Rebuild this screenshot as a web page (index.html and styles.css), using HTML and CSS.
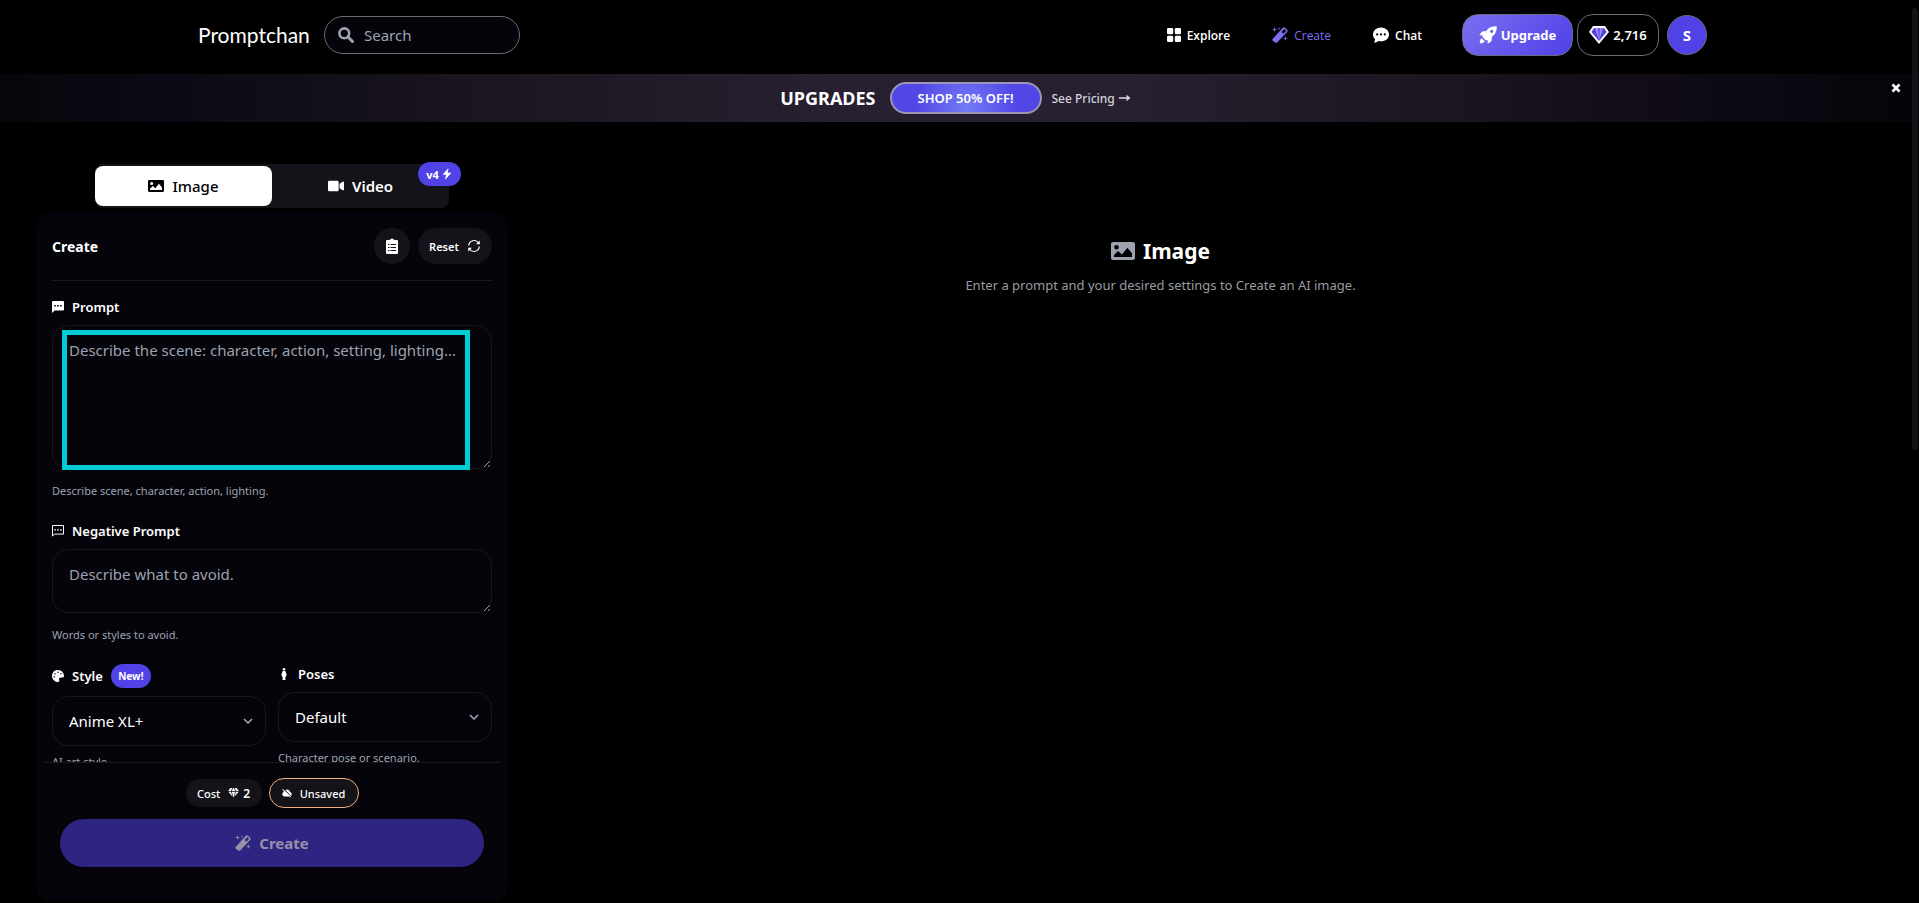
FILE: index.html
```html
<!DOCTYPE html>
<html lang="en">
<head>
<meta charset="utf-8">
<meta name="viewport" content="width=device-width, initial-scale=1">
<title>Promptchan - Create</title>
<link rel="stylesheet" href="styles.css">
</head>
<body>
<svg class="sprite" aria-hidden="true">
  <symbol id="i-search" viewBox="0 0 16 16"><circle cx="6.3" cy="6.3" r="4.9" fill="none" stroke="currentColor" stroke-width="2.6"/><path d="M10.2 10.2l4.2 4.2" stroke="currentColor" stroke-width="3" stroke-linecap="round"/></symbol>
  <symbol id="i-grid" viewBox="0 0 14 14"><rect width="6.2" height="6.2" rx="1.2"/><rect x="7.8" width="6.2" height="6.2" rx="1.2"/><rect y="7.8" width="6.2" height="6.2" rx="1.2"/><rect x="7.8" y="7.8" width="6.2" height="6.2" rx="1.2"/></symbol>
  <symbol id="i-wand" viewBox="0 0 16 16"><path fill-rule="evenodd" d="M.6 12 10.800.7q.9-.9 2-.1l2.400 2.200q.9.9.1 2L5.200 15.400q-1 .9-2 0L.7 13.700q-.8-.8-.1-1.700zM9.600 5.100l1.800 1.700 2.300-2.500q.4-.5 0-1l-.7-.7q-.6-.5-1.100 0z"/><path d="M2.600.200l.6 1.800 1.800.6-1.800.6-.6 1.800-.6-1.800L.2 2.600 2 2zM7 .300l.4.900.9.4-.9.4L7 2.900 6.600 2l-.9-.4.9-.4zM13.400 9l.6 1.900 1.900.6-1.900.6-.6 1.900-.6-1.900-1.900-.6 1.900-.6z"/></symbol>
  <symbol id="i-chat" viewBox="0 0 16 16"><path fill-rule="evenodd" d="M8 .5c4.500 0 8 3 8 6.900s-3.500 6.900-8 6.900c-.9 0-1.700-.1-2.500-.3-1 .9-2.500 1.600-4.600 1.500.8-.9 1.200-2.100 1.200-3.200C.8 11 0 9.300 0 7.400 0 3.500 3.500.5 8 .5zM4.200 6.300a1.100 1.100 0 1 0 0 2.200 1.100 1.100 0 0 0 0-2.200zm3.800 0a1.100 1.100 0 1 0 0 2.200 1.100 1.100 0 0 0 0-2.200zm3.800 0a1.100 1.100 0 1 0 0 2.200 1.100 1.100 0 0 0 0-2.200z"/></symbol>
  <symbol id="i-rocket" viewBox="0 0 18 18"><path fill-rule="evenodd" d="M17.700.3C13 .1 9.600 1.400 7.300 5L3.600 5.400q-.6.1-1 .6L.3 9.300l3.600.1-.5 1.700 3.500 3.500 1.700-.5.1 3.600 3.300-2.300q.5-.4.600-1l.4-3.700c3.600-2.300 4.900-5.700 4.700-10.400zM12.700 3.700a1.600 1.600 0 1 1 0 3.200 1.600 1.600 0 0 1 0-3.200z"/><path d="M2.600 12.200c-1.300.7-1.700 2.200-1.900 5.100 2.900-.2 4.400-.6 5.100-1.900z"/></symbol>
  <symbol id="i-gem-color" viewBox="0 0 20 18"><path fill="#fff" d="M4 0h12l4 6-10 12L0 6z"/><path fill="#5140df" d="M5 2h10l2.600 4L10 15 2.400 6z"/><path fill="#9d8cf5" d="M6 2h8l-1 4-3 8-3-8z"/><path fill="#6c58ed" d="M9 2h2v4l-1 8-1-8z"/></symbol>
  <symbol id="i-close" viewBox="0 0 10 10"><path d="M1.500 1.500l7 7m0-7l-7 7" stroke="currentColor" stroke-width="2.600"/></symbol>
  <symbol id="i-arrow" viewBox="0 0 12 8"><path d="M0 4h10" stroke="currentColor" stroke-width="1.600"/><path d="M7.500.8 11.500 4 7.500 7.200z"/></symbol>
  <symbol id="i-image" viewBox="0 0 24 18"><path fill-rule="evenodd" d="M2 0h20q2 0 2 2v14q0 2-2 2H2q-2 0-2-2V2Q0 0 2 0zM5.500 3a2.300 2.300 0 1 0 0 4.600 2.300 2.300 0 0 0 0-4.600zM3 15h18v-3.800l-4.600-5.500L11 12.500 7 9l-4 4z"/></symbol>
  <symbol id="i-video" viewBox="0 64 576 384"><path d="M336.200 64H47.800C21.400 64 0 85.400 0 111.800v288.400C0 426.600 21.400 448 47.800 448h288.400c26.400 0 47.800-21.400 47.800-47.800V111.800c0-26.400-21.400-47.800-47.800-47.800zm189.400 37.700L416 177.300v157.400l109.600 75.500c21.200 14.600 50.400-.3 50.400-25.800V127.500c0-25.400-29.100-40.400-50.400-25.800z"/></symbol>
  <symbol id="i-bolt" viewBox="0 0 10 12"><path d="M6.500 0 .5 6.800h3.600L2.900 12 9.500 4.800H5.700z"/></symbol>
  <symbol id="i-clip" viewBox="0 0 12 16"><path fill-rule="evenodd" d="M1 2h2.500V1.500h1.200a1.400 1.400 0 0 1 2.600 0h1.200V2H11q1 0 1 1v12q0 1-1 1H1q-1 0-1-1V3q0-1 1-1zM2 6v1h1.500V6zm2.500 0v1H10V6zM2 9v1h1.500V9zm2.500 0v1H10V9zM2 12v1h1.500v-1zm2.500 0v1H10v-1z"/></symbol>
  <symbol id="i-reset" viewBox="0 0 14 14"><path d="M1.700 6.500A5.400 5.400 0 0 1 11.600 4M12.300 7.500A5.400 5.400 0 0 1 2.400 10" fill="none" stroke="currentColor" stroke-width="1.200"/><path d="M12.800 1.500v3.800H9zM1.200 12.500V8.700H5z"/></symbol>
  <symbol id="i-msg" viewBox="0 0 12 12"><path fill-rule="evenodd" d="M1 0h10q1 0 1 1v7.600q0 1-1 1H2.600L0 12V1q0-1 1-1zM2.300 4v1.400h1.600V4zm2.900 0v1.400h1.600V4zm2.900 0v1.400h1.600V4z"/></symbol>
  <symbol id="i-msg-line" viewBox="0 0 12 12"><path d="M.5.500h11v8.600H2.500L.5 11z" fill="none" stroke="currentColor"/><path d="M2.300 4.200h1.600v1.200H2.300zm2.900 0h1.600v1.200H5.200zm2.900 0h1.600v1.200H8.100z"/></symbol>
  <symbol id="i-palette" viewBox="0 0 512 512"><path d="M204.300 5C104.900 24.400 24.800 104.300 5.200 203.400c-37 187 131.700 326.400 258.800 306.700 41.200-6.400 61.400-54.600 42.500-91.700-23.100-45.400 9.900-98.400 60.900-98.400h79.700c35.800 0 64.800-29.600 64.900-65.300C511.500 97.100 368.100-26.900 204.300 5zM96 320c-17.700 0-32-14.300-32-32s14.300-32 32-32 32 14.300 32 32-14.300 32-32 32zm32-128c-17.700 0-32-14.300-32-32s14.300-32 32-32 32 14.300 32 32-14.300 32-32 32zm128-64c-17.700 0-32-14.300-32-32s14.300-32 32-32 32 14.300 32 32-14.300 32-32 32zm128 64c-17.700 0-32-14.300-32-32s14.300-32 32-32 32 14.300 32 32-14.300 32-32 32z"/></symbol>
  <symbol id="i-person" viewBox="0 0 12 12"><circle cx="6" cy="1.300" r="1.300"/><path d="M4.700 3h2.600l1.500 4-.8.500.3 1.300H7.400V12H4.600V8.800h-.9L4 7.500 3.200 7z"/></symbol>
  <symbol id="i-gem" viewBox="0 0 12 11"><path d="M2.600 0h2L3.300 3.200H.2zM5.400 0h1.200l1.200 3.200H4.200zM7.400 0h2l2.400 3.200H8.700zM.3 4h3l1.800 5.600zM4.200 4h3.600L6 10.600zM8.700 4h3L6.900 9.600z"/></symbol>
  <symbol id="i-cloud-off" viewBox="0 0 12 10"><path d="M2.600 2.600 9.300 9.200H3A2.800 2.800 0 0 1 1.700 4 3 3 0 0 1 2.600 2.600zM4 1.500a3.400 3.400 0 0 1 5.500 2.200 2.800 2.800 0 0 1 1.500 4.600zM.3.900l.8-.8 9.900 9.100-.8.800z"/></symbol>
</svg>

<header class="topbar">
  <div class="topbar-inner">
    <a class="logo" href="#">Promptchan</a>
    <label class="search">
      <svg class="icon icon-16"><use href="#i-search"/></svg>
      <input type="search" placeholder="Search" aria-label="Search">
    </label>
    <nav class="nav">
      <a href="#"><svg class="icon icon-14"><use href="#i-grid"/></svg>Explore</a>
      <a class="active" href="#"><svg class="icon icon-16"><use href="#i-wand"/></svg>Create</a>
      <a href="#"><svg class="icon icon-16"><use href="#i-chat"/></svg>Chat</a>
    </nav>
    <div class="account">
      <button class="upgrade" type="button"><svg class="icon icon-18"><use href="#i-rocket"/></svg>Upgrade</button>
      <button class="gems" type="button"><svg class="icon icon-20"><use href="#i-gem-color"/></svg>2,716</button>
      <button class="avatar" type="button">S</button>
    </div>
  </div>
</header>

<div class="banner">
  <strong>UPGRADES</strong>
  <button class="shop" type="button">SHOP 50% OFF!</button>
  <a href="#">See Pricing <svg class="icon icon-arrow"><use href="#i-arrow"/></svg></a>
  <button class="close" type="button" aria-label="Close"><svg class="icon icon-10"><use href="#i-close"/></svg></button>
</div>

<main class="workspace">
  <section class="sidebar">
    <div class="tabs">
      <button class="tab selected" type="button"><svg class="icon icon-tab"><use href="#i-image"/></svg>Image</button>
      <button class="tab" type="button"><svg class="icon icon-tab"><use href="#i-video"/></svg>Video</button>
      <span class="version">v4 <svg class="icon icon-12"><use href="#i-bolt"/></svg></span>
    </div>

    <form class="panel">
      <div class="panel-head">
        <h1>Create</h1>
        <button class="round" type="button" aria-label="Prompt list"><svg class="icon icon-16"><use href="#i-clip"/></svg></button>
        <button class="reset" type="button">Reset <svg class="icon icon-14"><use href="#i-reset"/></svg></button>
      </div>

      <div class="fields">
        <div class="field">
          <label for="prompt"><svg class="icon icon-12"><use href="#i-msg"/></svg>Prompt</label>
          <div class="prompt-wrap">
            <textarea id="prompt" class="tall" placeholder="Describe the scene: character, action, setting, lighting..."></textarea>
            <div class="highlight"></div>
          </div>
          <p>Describe scene, character, action, lighting.</p>
        </div>
        <div class="field">
          <label for="negative"><svg class="icon icon-12"><use href="#i-msg-line"/></svg>Negative Prompt</label>
          <textarea id="negative" class="short" placeholder="Describe what to avoid."></textarea>
          <p>Words or styles to avoid.</p>
        </div>
        <div class="pair">
          <div class="field">
            <label for="style"><svg class="icon icon-12"><use href="#i-palette"/></svg>Style <span class="new">New!</span></label>
            <select id="style"><option>Anime XL+</option></select>
            <p>AI art style.</p>
          </div>
          <div class="field">
            <label for="poses"><svg class="icon icon-12"><use href="#i-person"/></svg>Poses</label>
            <select id="poses"><option>Default</option></select>
            <p>Character pose or scenario.</p>
          </div>
        </div>
      </div>

      <div class="panel-foot">
        <div class="chips">
          <span class="chip">Cost <svg class="icon icon-gem"><use href="#i-gem"/></svg><b>2</b></span>
          <button class="chip unsaved" type="button"><svg class="icon icon-10"><use href="#i-cloud-off"/></svg>Unsaved</button>
        </div>
        <button class="create" type="submit" disabled><svg class="icon icon-16"><use href="#i-wand"/></svg>Create</button>
      </div>
    </form>
  </section>

  <section class="result">
    <h2><svg class="icon icon-24"><use href="#i-image"/></svg>Image</h2>
    <p>Enter a prompt and your desired settings to Create an AI image.</p>
  </section>
</main>
<div class="scrollbar"></div>
</body>
</html>
```

FILE: styles.css
```css
* { box-sizing: border-box; }
body {
  margin: 0;
  height: 100vh;
  display: flex;
  flex-direction: column;
  overflow: hidden;
  background: #000;
  color: #fff;
  font-family: "Noto Sans", "Open Sans", sans-serif;
  font-size: 15px;
}
h1, h2, p { margin: 0; }
a { color: inherit; text-decoration: none; }
button, input, textarea, select { font: inherit; color: inherit; }
button { border: 0; padding: 0; display: flex; align-items: center; justify-content: center; }
.sprite { position: absolute; width: 0; height: 0; }
.icon { fill: currentColor; flex: none; }
.icon-10 { width: 10px; height: 10px; }
.icon-12 { width: 12px; height: 12px; }
.icon-14 { width: 14px; height: 14px; }
.icon-16 { width: 16px; height: 16px; }
.icon-18 { width: 18px; height: 18px; }
.icon-20 { width: 20px; height: 18px; }
.icon-24 { width: 24px; height: 18px; }
.icon-tab { width: 16px; height: 12px; }
.icon-arrow { width: 12px; height: 8px; }
.icon-gem { width: 11px; height: 10px; }

.topbar { flex: none; height: 74px; padding: 0 212px 4px 198px; }
.topbar-inner { height: 100%; display: flex; align-items: center; }
.logo { font-family: Lato, sans-serif; font-size: 21px; width: 126px; line-height: 28px; }
.search {
  display: flex;
  align-items: center;
  gap: 10px;
  width: 196px;
  height: 38px;
  padding: 0 14px 0 13px;
  border: 1px solid #6b6b73;
  border-radius: 19px;
  background: #05040b;
  color: #9ca3af;
}
.search input { min-width: 0; flex: 1; padding: 0; border: 0; outline: 0; background: none; }
input::placeholder, textarea::placeholder { color: #9ca3af; opacity: 1; }
.nav { display: flex; gap: 42px; margin-left: auto; font-family: "Open Sans", sans-serif; font-size: 12px; font-weight: 600; }
.nav a { display: flex; align-items: center; gap: 6px; }
.nav .active { color: #7c6cf0; font-weight: 500; }
.account { display: flex; align-items: center; margin-left: 40px; font-size: 13px; font-weight: 700; }
.upgrade {
  gap: 4px;
  width: 111px;
  height: 42px;
  margin-right: 4px;
  border: 1px solid #6b6b80;
  border-radius: 16px;
  background: linear-gradient(135deg, #7a70f0, #4f3fe8);
}
.gems { gap: 4px; width: 82px; height: 42px; margin-right: 8px; border: 1px solid #6b6b73; border-radius: 16px; background: #000; font-weight: 600; }
.avatar { width: 40px; height: 40px; border: 1px solid #6b6b80; border-radius: 50%; background: #5042e6; font-size: 15px; }

.banner {
  position: relative;
  flex: none;
  height: 48px;
  display: flex;
  align-items: center;
  justify-content: center;
  padding-right: 8px;
  background: linear-gradient(90deg, #07060c 0%, #0b0913 8%, #1d1722 28%, #282030 44%, #282030 58%, #1a151f 76%, #120c17 85%, #0a0912 93%, #050409 99%);
}
.banner strong { font-size: 18px; margin-right: 14px; }
.banner a { font-size: 12px; font-weight: 500; color: #d5d3dc; display: flex; align-items: center; gap: 4px; }
.shop {
  width: 152px;
  height: 32px;
  margin-right: 10px;
  border: 2px solid #9a96b4;
  border-radius: 16px;
  background: radial-gradient(circle at 50% 80%, #737bf5 0, #5247e6 50px);
  background-origin: border-box;
  font-size: 13px;
  font-weight: 600;
}
.close { position: absolute; top: 9px; right: 18px; background: none; }

.workspace { flex: 1; min-height: 0; display: flex; padding: 42px 8px 2px 36px; }
.sidebar { flex: none; width: 472px; display: flex; flex-direction: column; }
.tabs {
  position: relative;
  flex: none;
  align-self: center;
  display: flex;
  align-items: center;
  width: 354px;
  height: 44px;
  margin-bottom: 4px;
  border-radius: 8px;
  background: #14131a;
}
.tab { flex: 1; gap: 8px; height: 40px; border-radius: 8px; background: none; font-weight: 600; }
.tab.selected { background: #fff; color: #000; font-weight: 500; }
.version {
  position: absolute;
  top: -2px;
  right: -12px;
  display: flex;
  align-items: center;
  justify-content: center;
  gap: 2px;
  width: 43px;
  height: 24px;
  border-radius: 12px;
  background: #5042e6;
  font-size: 11px;
  font-weight: 700;
}
.panel { flex: 1; min-height: 0; display: flex; flex-direction: column; border-radius: 16px; background: #05040a; }
.panel-head { flex: none; display: flex; align-items: center; gap: 8px; height: 69px; margin: 0 16px; border-bottom: 1px solid #18181f; }
.panel-head h1 { flex: 1; font-size: 14px; font-weight: 700; }
.round, .reset { height: 36px; border-radius: 18px; background: #14131a; }
.round { width: 36px; }
.reset { width: 74px; gap: 8px; font-size: 11px; font-weight: 600; }
.fields { flex: 1; min-height: 0; overflow: hidden; padding: 16px 16px 0; display: flex; flex-direction: column; gap: 20px; }
.field { flex: none; min-width: 0; }
.field label { display: flex; align-items: center; gap: 8px; height: 20px; margin-bottom: 8px; font-size: 13px; font-weight: 600; }
.field p { margin-top: 12px; font-size: 11px; line-height: 20px; color: #9ca3af; }
.field:nth-child(2) > p { line-height: 19px; }
textarea, select { display: block; width: 100%; border: 1px solid #18181f; border-radius: 16px; background-color: #05040a; }
textarea { padding: 12px 16px; line-height: 24px; outline: 0; overflow: hidden; color-scheme: dark; }
.tall { height: 144px; }
.short { height: 64px; }
.prompt-wrap { position: relative; }
.highlight { position: absolute; inset: 5px 22px -1px 10px; border: 5px solid #00ccd6; pointer-events: none; }
.pair { display: grid; grid-template-columns: 1fr 1fr; gap: 12px; }
.pair .field p { margin-top: 6px; }
.pair label:has(.new) { height: 24px; }
select {
  height: 50px;
  padding: 0 16px;
  appearance: none;
  background-image: url("data:image/svg+xml,%3Csvg xmlns='http://www.w3.org/2000/svg' viewBox='0 0 10 6'%3E%3Cpath d='M1 1l4 4 4-4' fill='none' stroke='%239ca3af' stroke-width='1.6'/%3E%3C/svg%3E");
  background-repeat: no-repeat;
  background-position: right 12px center;
  background-size: 10px 6px;
}
.new { display: flex; align-items: center; justify-content: center; width: 40px; height: 24px; border-radius: 12px; background: #5042e6; font-size: 10px; font-weight: 700; }
.panel-foot { flex: none; margin: 0 8px; padding: 15px 16px 34px; border-top: 1px solid #18181f; }
.chips { display: flex; align-items: center; justify-content: center; gap: 7px; margin-bottom: 11px; }
.chip { display: flex; align-items: center; justify-content: center; width: 76px; height: 28px; border-radius: 15px; background: #14131a; font-size: 11px; font-weight: 500; }
.chip .icon-gem { margin: 0 4px 0 8px; }
.chip b { font-size: 12px; font-weight: 600; }
.unsaved { width: 90px; height: 30px; gap: 8px; border: 1px solid #f3b07c; }
.create { width: 100%; height: 48px; gap: 8px; border-radius: 24px; background: #2e2582; color: #9690a8; font-weight: 700; }

.result { flex: 1; display: flex; flex-direction: column; align-items: center; padding: 71px 98px 0 0; }
.result h2 { display: flex; align-items: center; gap: 8px; font-size: 21px; line-height: 32px; font-weight: 700; }
.result h2 .icon { color: #9ca3af; }
.result p { margin-top: 8px; font-size: 13px; line-height: 20px; color: #9a9aa2; }
.scrollbar { position: fixed; top: 8px; right: 1px; width: 6px; height: 49vh; border-radius: 3px; background: #131219; }
```
